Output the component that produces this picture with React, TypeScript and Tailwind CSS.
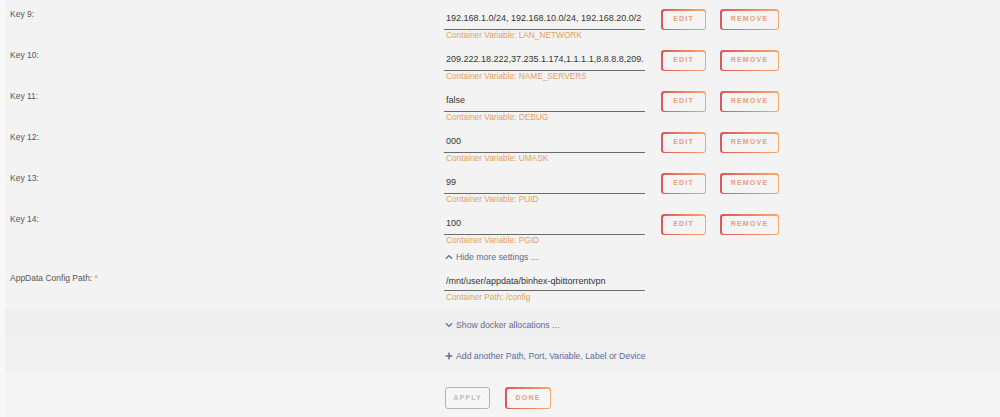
import React from "react";
import { FaChevronUp, FaChevronDown, FaPlus } from "react-icons/fa";

type Row = { label: string; value: string; variable: string };

const rows: Row[] = [
  { label: "Key 9:", value: "192.168.1.0/24, 192.168.10.0/24, 192.168.20.0/2", variable: "LAN_NETWORK" },
  { label: "Key 10:", value: "209.222.18.222,37.235.1.174,1.1.1.1,8.8.8.8,209.", variable: "NAME_SERVERS" },
  { label: "Key 11:", value: "false", variable: "DEBUG" },
  { label: "Key 12:", value: "000", variable: "UMASK" },
  { label: "Key 13:", value: "99", variable: "PUID" },
  { label: "Key 14:", value: "100", variable: "PGID" },
];

function GradientButton({ label, width }: { label: string; width: string }) {
  return (
    <div className={`${width} h-[21px] rounded-[3px] bg-gradient-to-r from-[#d9575c] to-[#f5aa6c] p-[1.5px]`}>
      <div className="flex h-full w-full items-center justify-center rounded-[2px] bg-[#f4f4f4] text-[7px] font-bold tracking-[1.2px] text-[#e6a07c]">
        {label}
      </div>
    </div>
  );
}

function KeyRow({ row }: { row: Row }) {
  return (
    <div className="flex h-[41px]">
      <div className="w-[439px] pl-[5px] pt-[8px] text-[8.5px] leading-[12px] text-[#555]">{row.label}</div>
      <div className="w-[201px]">
        <div className="h-[30px] overflow-hidden whitespace-nowrap border-b border-[#6a6a6a] pl-[2px] pt-[12px] text-[9px] leading-[12px] text-[#333]">
          {row.value}
        </div>
        <div className="pl-[2px] text-[8.3px] leading-[11px] text-[#e2a262]">Container Variable: {row.variable}</div>
      </div>
      <div className="ml-[16px] mt-[9px] flex gap-[14px]">
        <GradientButton label="EDIT" width="w-[45px]" />
        <GradientButton label="REMOVE" width="w-[59px]" />
      </div>
    </div>
  );
}

export default function App() {
  return (
    <div className="h-[417px] w-[1000px] overflow-hidden bg-[#f8f8f8] font-['Liberation_Sans',Arial,sans-serif]">
      <div className="ml-[5px] flex h-full flex-col bg-[#f3f3f3]">
        {rows.map((r) => (
          <KeyRow key={r.label} row={r} />
        ))}

        {/* toggle for the advanced settings */}
        <div className="h-[17px] pl-[440px] pt-[5px]">
          <div className="flex items-center gap-[3px] text-[8.7px] leading-[12px] text-[#5d6c96]">
            <FaChevronUp className="h-[8px] w-[8px]" />
            <span>Hide more settings ...</span>
          </div>
        </div>

        {/* AppData path */}
        <div className="flex h-[41px]">
          <div className="w-[439px] pl-[5px] pt-[9px] text-[8.5px] leading-[12px] text-[#555]">
            AppData Config Path: <span className="text-[#e58a8a]">*</span>
          </div>
          <div className="w-[201px]">
            <div className="h-[28px] overflow-hidden whitespace-nowrap border-b border-[#6a6a6a] pl-[2px] pt-[12px] text-[9px] leading-[12px] text-[#333]">
              /mnt/user/appdata/binhex-qbittorrentvpn
            </div>
            <div className="pl-[2px] text-[8.3px] leading-[12px] text-[#e2a262]">Container Path: /config</div>
          </div>
        </div>

        <div className="h-[5px]" />
        <div className="h-[33px] border-b border-[#f5f5f5] bg-[#efefef] pl-[440px] pt-[10px]">
          <div className="flex items-center gap-[3px] text-[8.7px] leading-[12px] text-[#5d6c96]">
            <FaChevronDown className="h-[8px] w-[8px]" />
            <span>Show docker allocations ...</span>
          </div>
        </div>
        <div className="h-[29px] bg-[#f0f0f0] pl-[440px] pt-[8px]">
          <div className="flex items-center gap-[3px] text-[8.7px] leading-[12px] text-[#5d6c96]">
            <FaPlus className="h-[8px] w-[8px]" />
            <span>Add another Path, Port, Variable, Label or Device</span>
          </div>
        </div>

        <div className="flex flex-1 gap-[15px] bg-[#f4f4f4] pl-[440px] pt-[16px]">
          <div className="flex h-[22px] w-[45px] items-center justify-center rounded-[3px] border-[1.5px] border-[#b4b4b4] bg-[#f6f6f6] text-[7px] font-bold tracking-[1.2px] text-[#bdbdbd]">
            APPLY
          </div>
          <div className="h-[22px] w-[46px] rounded-[3px] bg-gradient-to-r from-[#d9575c] to-[#f5aa6c] p-[1.5px]">
            <div className="flex h-full w-full items-center justify-center rounded-[2px] bg-[#f6f6f6] text-[7px] font-bold tracking-[1.2px] text-[#e6a07c]">
              DONE
            </div>
          </div>
        </div>
      </div>
    </div>
  );
}
